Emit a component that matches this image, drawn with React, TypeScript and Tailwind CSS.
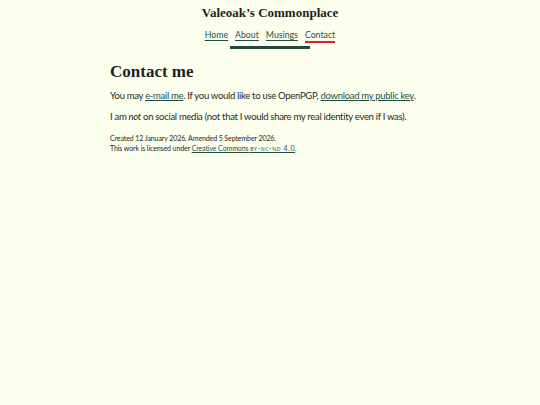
export default function App() {
  return (
    <div className="min-h-[405px] bg-[#fcffee] text-[#262626]" style={{ fontFamily: 'Lato, sans-serif' }}>
      <header className="flex flex-col items-center pt-[4px]">
        <div className="text-[13px] font-bold leading-[17px] text-[#1f1f1f]" style={{ fontFamily: '"Liberation Serif", serif' }}>
          Valeoak’s Commonplace
        </div>
        <nav className="mt-[8px] flex gap-[7px] text-[8.75px] leading-[12px]">
          <a className="text-[#1f4f44] underline underline-offset-2">Home</a>
          <a className="text-[#1f4f44] underline underline-offset-2">About</a>
          <a className="text-[#1f4f44] underline underline-offset-2">Musings</a>
          <a className="text-[#1f4f44] border-b-2 border-[#e0202b]">Contact</a>
        </nav>
        <div className="mt-[3px] h-[3px] w-[80px] bg-[#1e4a40]" />
      </header>
      <main className="mx-auto w-[320px] pt-[12px]">
        <h1 className="text-[17px] font-bold leading-[22px] text-[#1f1f1f]" style={{ fontFamily: '"Liberation Serif", serif' }}>
          Contact me
        </h1>
        <p className="mt-[6px] text-[9.5px] leading-[14px] tracking-[-0.3px]">
          You may <a className="text-[#1f4f44] underline">e-mail me</a>. If you would like to use OpenPGP,{' '}
          <a className="text-[#1f4f44] underline">download my public key</a>.
        </p>
        <p className="mt-[7px] text-[9.5px] leading-[14px] tracking-[-0.3px]">
          I am <em>not</em> on social media (not that I would share my real identity even if I was).
        </p>
        <div className="mt-[9px] text-[7px] leading-[10px] tracking-[-0.1px]">
          <p>Created 12 January 2026. Amended 5 September 2026.</p>
          <p>
            This work is licensed under{' '}
            <a className="text-[#1f4f44] underline">
              Creative Commons{' '}
              <span className="lowercase tracking-[0.6px]" style={{ fontVariant: 'small-caps' }}>BY-NC-ND 4.0</span>
            </a>
            .
          </p>
        </div>
      </main>
    </div>
  );
}
